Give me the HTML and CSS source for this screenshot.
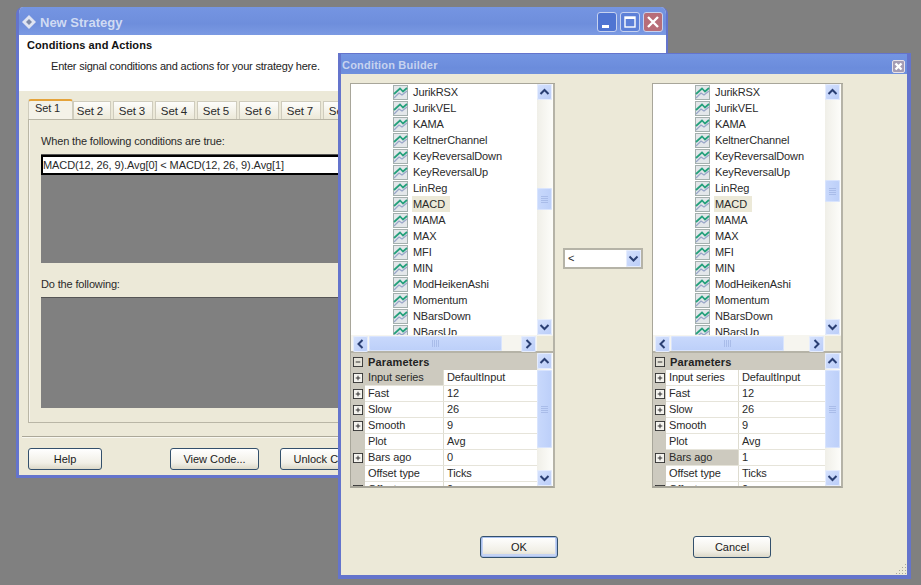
FILE: index.html
```html
<!DOCTYPE html>
<html lang="en">
<head>
<meta charset="utf-8">
<title>New Strategy</title>
<link rel="stylesheet" href="styles.css">
</head>
<body>
<svg class="defs" width="0" height="0">
  <symbol id="ind" viewBox="0 0 15 15">
    <rect x="0.5" y="0.5" width="14" height="14" fill="#e3e7ea" stroke="#a4b0ae"/>
    <path d="M1 13l5-5 3 2 5-4" fill="none" stroke="#98a6c8" stroke-width="1.3"/>
    <path d="M1 9l6-5.5 3 3L14 3" fill="none" stroke="#25a07c" stroke-width="1.7"/>
  </symbol>
  <symbol id="up" viewBox="0 0 15 15"><path d="M3.5 9.5l4-4 4 4" fill="none" stroke="#2a3f73" stroke-width="2"/></symbol>
  <symbol id="down" viewBox="0 0 15 15"><path d="M3.5 5.5l4 4 4-4" fill="none" stroke="#2a3f73" stroke-width="2"/></symbol>
  <symbol id="left" viewBox="0 0 15 15"><path d="M9.5 3.5l-4 4 4 4" fill="none" stroke="#2a3f73" stroke-width="2"/></symbol>
  <symbol id="right" viewBox="0 0 15 15"><path d="M5.5 3.5l4 4-4 4" fill="none" stroke="#2a3f73" stroke-width="2"/></symbol>
  <symbol id="plus" viewBox="0 0 11 11"><rect x="0.5" y="0.5" width="10" height="10" fill="#f4f3ee" stroke="#333"/><path d="M3 5.5h5M5.5 3v5" stroke="#222"/></symbol>
  <symbol id="minus" viewBox="0 0 11 11"><rect x="0.5" y="0.5" width="10" height="10" fill="#e4e2d8" stroke="#333"/><path d="M3 5.5h5" stroke="#222"/></symbol>
</svg>

<section class="window main-window">
  <header class="titlebar main-title">
    <svg class="app-icon" width="18" height="18" viewBox="0 0 18 18"><path d="M9 2l7 7-7 7-7-7z" fill="#dfe4f2"/><path d="M9 6l3 3-3 3-3-3z" fill="#7d8aa8"/></svg>
    <span class="title-text title-large">New Strategy</span>
    <span class="caption-btn btn-min"><svg width="20" height="20" viewBox="0 0 20 20"><rect x="5" y="13" width="7" height="3" fill="#fff"/></svg></span>
    <span class="caption-btn btn-max"><svg width="20" height="20" viewBox="0 0 20 20"><rect x="5" y="5" width="10" height="10" fill="none" stroke="#fff" stroke-width="1.4"/><path d="M5 6h10" stroke="#fff" stroke-width="2"/></svg></span>
    <span class="caption-btn btn-close"><svg width="20" height="20" viewBox="0 0 20 20"><path d="M5 5l10 10M15 5L5 15" stroke="#fff" stroke-width="2.4"/></svg></span>
  </header>
  <div class="wizard-head">
    <h1>Conditions and Actions</h1>
    <p>Enter signal conditions and actions for your strategy here.</p>
  </div>
  <div class="wizard-body">
    <div class="tabs">
      <span class="tab tab-active">Set 1</span>
      <span class="tab tab-n2">Set 2</span>
      <span class="tab">Set 3</span>
      <span class="tab">Set 4</span>
      <span class="tab">Set 5</span>
      <span class="tab">Set 6</span>
      <span class="tab">Set 7</span>
      <span class="tab">Set 8</span>
    </div>
    <div class="tab-panel">
      <div class="label">When the following conditions are true:</div>
      <div class="gray-box box-conditions"><div class="cond-row">MACD(12, 26, 9).Avg[0] &lt; MACD(12, 26, 9).Avg[1]</div></div>
      <div class="label label-do">Do the following:</div>
      <div class="gray-box box-actions"></div>
    </div>
    <div class="groove"></div>
    <div class="main-buttons">
      <button class="btn btn-help">Help</button>
      <button class="btn btn-view">View Code...</button>
      <button class="btn btn-unlock">Unlock Code</button>
    </div>
  </div>
</section>

<section class="window builder">
  <header class="titlebar builder-title">
    <span class="title-text title-small">Condition Builder</span>
    <span class="small-close"><svg width="13" height="13" viewBox="0 0 13 13"><path d="M3.5 3.5l6 6M9.5 3.5l-6 6" stroke="#fff" stroke-width="2.4"/></svg></span>
  </header>
  <div class="builder-body">
    <div class="columns">
      <div class="panel panel-left">
        <div class="list">
          <div class="list-main">
            <ul class="rows">
              <li><svg class="ic"><use href="#ind"/></svg><span>JurikRSX</span></li>
              <li><svg class="ic"><use href="#ind"/></svg><span>JurikVEL</span></li>
              <li><svg class="ic"><use href="#ind"/></svg><span>KAMA</span></li>
              <li><svg class="ic"><use href="#ind"/></svg><span>KeltnerChannel</span></li>
              <li><svg class="ic"><use href="#ind"/></svg><span>KeyReversalDown</span></li>
              <li><svg class="ic"><use href="#ind"/></svg><span>KeyReversalUp</span></li>
              <li><svg class="ic"><use href="#ind"/></svg><span>LinReg</span></li>
              <li><svg class="ic"><use href="#ind"/></svg><span class="sel">MACD</span></li>
              <li><svg class="ic"><use href="#ind"/></svg><span>MAMA</span></li>
              <li><svg class="ic"><use href="#ind"/></svg><span>MAX</span></li>
              <li><svg class="ic"><use href="#ind"/></svg><span>MFI</span></li>
              <li><svg class="ic"><use href="#ind"/></svg><span>MIN</span></li>
              <li><svg class="ic"><use href="#ind"/></svg><span>ModHeikenAshi</span></li>
              <li><svg class="ic"><use href="#ind"/></svg><span>Momentum</span></li>
              <li><svg class="ic"><use href="#ind"/></svg><span>NBarsDown</span></li>
              <li><svg class="ic"><use href="#ind"/></svg><span>NBarsUp</span></li>
            </ul>
            <div class="vscroll">
              <span class="sb-btn"><svg><use href="#up"/></svg></span>
              <span class="track"><span class="thumb thumb-left"><i></i></span></span>
              <span class="sb-btn"><svg><use href="#down"/></svg></span>
            </div>
          </div>
          <div class="hscroll">
            <span class="sb-btn"><svg><use href="#left"/></svg></span>
            <span class="h-track"><span class="h-thumb h-thumb-left"><i></i></span></span>
            <span class="sb-btn"><svg><use href="#right"/></svg></span>
            <span class="corner"></span>
          </div>
        </div>
        <div class="params">
          <div class="params-main">
            <div class="grid grid-left">
              <div class="cat"><svg class="box"><use href="#minus"/></svg><b>Parameters</b></div>
              <div class="row"><span class="gut"><svg class="box"><use href="#plus"/></svg></span><span class="name name-sel">Input series</span><span class="val">DefaultInput</span></div>
              <div class="row"><span class="gut"><svg class="box"><use href="#plus"/></svg></span><span class="name">Fast</span><span class="val">12</span></div>
              <div class="row"><span class="gut"><svg class="box"><use href="#plus"/></svg></span><span class="name">Slow</span><span class="val">26</span></div>
              <div class="row"><span class="gut"><svg class="box"><use href="#plus"/></svg></span><span class="name">Smooth</span><span class="val">9</span></div>
              <div class="row"><span class="gut"></span><span class="name">Plot</span><span class="val">Avg</span></div>
              <div class="row"><span class="gut"><svg class="box"><use href="#plus"/></svg></span><span class="name">Bars ago</span><span class="val">0</span></div>
              <div class="row"><span class="gut"></span><span class="name">Offset type</span><span class="val">Ticks</span></div>
              <div class="row"><span class="gut"><svg class="box"><use href="#plus"/></svg></span><span class="name">Offset</span><span class="val">0</span></div>
            </div>
            <div class="vscroll">
              <span class="sb-btn"><svg><use href="#up"/></svg></span>
              <span class="track"><span class="thumb thumb-param"><i></i></span></span>
              <span class="sb-btn"><svg><use href="#down"/></svg></span>
            </div>
          </div>
        </div>
      </div>

      <div class="combo"><span class="combo-text">&lt;</span><span class="sb-btn combo-btn"><svg><use href="#down"/></svg></span></div>

      <div class="panel panel-right">
        <div class="list">
          <div class="list-main">
            <ul class="rows">
              <li><svg class="ic"><use href="#ind"/></svg><span>JurikRSX</span></li>
              <li><svg class="ic"><use href="#ind"/></svg><span>JurikVEL</span></li>
              <li><svg class="ic"><use href="#ind"/></svg><span>KAMA</span></li>
              <li><svg class="ic"><use href="#ind"/></svg><span>KeltnerChannel</span></li>
              <li><svg class="ic"><use href="#ind"/></svg><span>KeyReversalDown</span></li>
              <li><svg class="ic"><use href="#ind"/></svg><span>KeyReversalUp</span></li>
              <li><svg class="ic"><use href="#ind"/></svg><span>LinReg</span></li>
              <li><svg class="ic"><use href="#ind"/></svg><span class="sel">MACD</span></li>
              <li><svg class="ic"><use href="#ind"/></svg><span>MAMA</span></li>
              <li><svg class="ic"><use href="#ind"/></svg><span>MAX</span></li>
              <li><svg class="ic"><use href="#ind"/></svg><span>MFI</span></li>
              <li><svg class="ic"><use href="#ind"/></svg><span>MIN</span></li>
              <li><svg class="ic"><use href="#ind"/></svg><span>ModHeikenAshi</span></li>
              <li><svg class="ic"><use href="#ind"/></svg><span>Momentum</span></li>
              <li><svg class="ic"><use href="#ind"/></svg><span>NBarsDown</span></li>
              <li><svg class="ic"><use href="#ind"/></svg><span>NBarsUp</span></li>
            </ul>
            <div class="vscroll">
              <span class="sb-btn"><svg><use href="#up"/></svg></span>
              <span class="track"><span class="thumb thumb-right"><i></i></span></span>
              <span class="sb-btn"><svg><use href="#down"/></svg></span>
            </div>
          </div>
          <div class="hscroll">
            <span class="sb-btn"><svg><use href="#left"/></svg></span>
            <span class="h-track"><span class="h-thumb h-thumb-right"><i></i></span></span>
            <span class="sb-btn"><svg><use href="#right"/></svg></span>
            <span class="corner"></span>
          </div>
        </div>
        <div class="params">
          <div class="params-main">
            <div class="grid grid-right">
              <div class="cat"><svg class="box"><use href="#minus"/></svg><b>Parameters</b></div>
              <div class="row"><span class="gut"><svg class="box"><use href="#plus"/></svg></span><span class="name">Input series</span><span class="val">DefaultInput</span></div>
              <div class="row"><span class="gut"><svg class="box"><use href="#plus"/></svg></span><span class="name">Fast</span><span class="val">12</span></div>
              <div class="row"><span class="gut"><svg class="box"><use href="#plus"/></svg></span><span class="name">Slow</span><span class="val">26</span></div>
              <div class="row"><span class="gut"><svg class="box"><use href="#plus"/></svg></span><span class="name">Smooth</span><span class="val">9</span></div>
              <div class="row"><span class="gut"></span><span class="name">Plot</span><span class="val">Avg</span></div>
              <div class="row"><span class="gut"><svg class="box"><use href="#plus"/></svg></span><span class="name name-sel">Bars ago</span><span class="val">1</span></div>
              <div class="row"><span class="gut"></span><span class="name">Offset type</span><span class="val">Ticks</span></div>
              <div class="row"><span class="gut"><svg class="box"><use href="#plus"/></svg></span><span class="name">Offset</span><span class="val">0</span></div>
            </div>
            <div class="vscroll">
              <span class="sb-btn"><svg><use href="#up"/></svg></span>
              <span class="track"><span class="thumb thumb-param"><i></i></span></span>
              <span class="sb-btn"><svg><use href="#down"/></svg></span>
            </div>
          </div>
        </div>
      </div>
    </div>
    <div class="builder-buttons">
      <button class="btn btn-ok">OK</button>
      <button class="btn btn-cancel">Cancel</button>
    </div>
    <svg class="grip" width="12" height="12" viewBox="0 0 12 12"><path d="M10 1h1v1h-1zM7 4h1v1H7zM10 4h1v1h-1zM4 7h1v1H4zM7 7h1v1H7zM10 7h1v1h-1zM1 10h1v1H1zM4 10h1v1H4zM7 10h1v1H7zM10 10h1v1h-1z" fill="#a8a69a"/></svg>
  </div>
</section>
</body>
</html>
```
FILE: styles.css
```css
* { box-sizing: border-box; }
html, body { margin: 0; height: 100%; }
body {
  position: relative;
  width: 921px;
  height: 585px;
  overflow: hidden;
  background: #808080;
  font: 11px/16px "Liberation Sans", Arial, sans-serif;
  letter-spacing: -0.1px;
  color: #2a2a2a;
}
.defs { position: absolute; }
.window {
  position: absolute;
  display: flex;
  flex-direction: column;
  overflow: hidden;
}
.main-window {
  left: 16px; top: 7px;
  width: 652px; height: 471px;
  background: #ece9d8;
  border-radius: 7px 7px 0 0;
  border: solid #6474cc;
  border-width: 0 2px 3px 3px;
}
.builder {
  left: 338px; top: 53px;
  width: 573px; height: 526px;
  background: #ece9d8;
  border: solid #6474cc;
  border-width: 1px 4px 4px 3px;
}
.titlebar { display: flex; align-items: center; flex: none; }
.main-title {
  height: 28px;
  margin-left: -3px;
  margin-right: -2px;
  padding: 2px 5px 0 4px;
  background: linear-gradient(#7595e2, #6e8edc 60%, #7b9ae3);
}
.builder-title {
  height: 20px;
  padding: 2px 2px 0 1px;
  background: linear-gradient(#7495e2, #6b8cdc 70%, #6f90dd);
}
.app-icon { margin-right: 2px; }
.title-text {
  flex: 1;
  font: bold 13px/18px "Liberation Sans", Arial, sans-serif;
  color: #d0dbf3;
  letter-spacing: 0;
}
.title-large { padding-top: 1px; }
.title-small { font-size: 11px; color: #c7d3ef; letter-spacing: 0.2px; }
.caption-btn {
  width: 20px; height: 20px;
  margin-left: 3px;
  border-radius: 3px;
  border: 1px solid #c7d2ef;
  display: flex;
  background: #4f74d2;
}
.caption-btn svg { margin: -1px; }
.btn-max { background: #5d80d8; }
.btn-close { background: #b86d78; }
.small-close {
  width: 13px; height: 13px;
  margin-top: 2px;
  background: #a59db4;
  border: 1px solid #e8e3ea;
  border-radius: 2px;
}
.small-close svg { display: block; margin: -1px; }

.wizard-head {
  height: 56px;
  flex: none;
  background: #fff;
  padding: 2px 0 0 8px;
}
.wizard-head h1 { margin: 0; font: bold 11px/16px "Liberation Sans", Arial, sans-serif; letter-spacing: 0.1px; color: #111; }
.wizard-head p { margin: 5px 0 0 24px; color: #222; letter-spacing: -0.2px; }
.wizard-body {
  flex: 1;
  display: flex;
  flex-direction: column;
  padding: 8px 0 0 9px;
}
.tabs { display: flex; height: 20px; flex: none; align-items: flex-end; }
.tab {
  width: 40px;
  height: 18px;
  margin-right: 2px;
  padding-right: 2px;
  background: linear-gradient(#fdfdfb, #ece9d8);
  border: 1px solid #cfccbd;
  border-bottom: 0;
  text-align: center;
  font-size: 11.5px;
  line-height: 18px;
  flex: none;
}
.tab-active {
  width: 45px;
  height: 20px;
  margin-right: 0;
  padding-right: 6px;
  font-size: 11px;
  background: #f4f2e8;
  border-top: 2px solid #e5a33a;
  border-radius: 3px 3px 0 0;
  line-height: 15px;
}
.tab-n2 { width: 38px; padding-right: 4px; }
.tab-panel {
  flex: none;
  width: 622px;
  height: 304px;
  border: 1px solid #b9b6a6;
  background: #ece9d8;
  box-shadow: inset 1px 0 0 #f6f4ec, inset -1px 0 0 #d6d3c4;
  padding: 13px 0 0 12px;
}
.label { height: 16px; line-height: 16px; letter-spacing: -0.15px; }
.gray-box { background: #808080; width: 580px; border-top: 1px solid #555; }
.box-conditions { height: 109px; margin-top: 5px; }
.cond-row {
  height: 20px;
  background: #fff;
  border: 2px solid #000;
  padding-left: 0;
  line-height: 16px;
  white-space: nowrap;
}
.label-do { margin-top: 13px; }
.box-actions { height: 111px; margin-top: 5px; }
.groove { flex: none; height: 2px; margin: 13px 0 0 -6px; background: #aba899; border-bottom: 1px solid #f8f7f0; }
.main-buttons { display: flex; margin-top: 10px; }
.btn {
  font: 11px/16px "Liberation Sans", Arial, sans-serif;
  color: #1a1a1a;
  height: 22px;
  padding: 0;
  background: linear-gradient(#ffffff, #f1efe6 70%, #dcd8c8);
  border: 1px solid #33506c;
  border-radius: 3px;
}
.btn-help { width: 74px; }
.btn-view { width: 89px; margin-left: 68px; }
.btn-unlock { width: 90px; margin-left: 21px; }

.builder-body {
  position: relative;
  flex: 1;
  display: flex;
  flex-direction: column;
  padding: 9px 0 0 9px;
}
.columns { display: flex; flex: none; }
.panel { flex: none; display: flex; flex-direction: column; border: solid #a8a69a; border-width: 1px 0 0 1px; }
.panel-left { width: 205px; }
.panel-right { width: 191px; }
.list {
  height: 269px;
  flex: none;
  display: flex;
  flex-direction: column;
  background: #fff;
  border-right: 2px solid #b5b3a7;
}
.list-main { flex: none; height: 251px; display: flex; }
.rows {
  flex: 1;
  margin: 0;
  padding: 0 0 0 42px;
  list-style: none;
  overflow: hidden;
  background: #fff;
}
.rows li { height: 16px; display: flex; align-items: center; }
.ic { width: 15px; height: 15px; flex: none; margin-right: 4px; }
.rows span { padding: 0 1px; height: 16px; line-height: 16px; white-space: nowrap; }
.rows .sel { background: #ece9d8; padding-right: 5px; }
.vscroll {
  width: 16px;
  flex: none;
  display: flex;
  flex-direction: column;
  background: linear-gradient(90deg, #f0efe8, #fdfdfa);
}
.sb-btn {
  width: 15px; height: 16px;
  flex: none;
  display: block;
  background: linear-gradient(135deg, #d6e2fd, #b9ccf8);
  border-radius: 2px;
  box-shadow: inset 0 0 0 1px #e6edfd;
}
.sb-btn svg { width: 15px; height: 16px; display: block; }
.track { flex: 1; display: block; padding-top: 1px; min-height: 0; }
.thumb {
  display: flex;
  align-items: center;
  justify-content: center;
  width: 15px;
  background: linear-gradient(90deg, #c9d9fc, #bccff9);
  border-radius: 2px;
  box-shadow: inset 0 0 0 1px #d9e4fd;
}
.thumb i, .h-thumb i { display: block; width: 7px; height: 7px; background: repeating-linear-gradient(#a9bce9 0 1px, transparent 1px 2px); }
.thumb-left { height: 22px; margin-top: 87px; }
.thumb-right { height: 22px; margin-top: 79px; }
.thumb-param { height: 78px; }
.hscroll { flex: none; display: flex; padding: 1px 0 0 2px; background: #f6f5ef; border-bottom: 2px solid #b5b3a7; height: 18px; }
.h-track { flex: 1; display: block; padding-left: 1px; }
.h-thumb {
  display: flex;
  align-items: center;
  justify-content: center;
  height: 15px;
  background: linear-gradient(#c9d9fc, #bccff9);
  border-radius: 2px;
  box-shadow: inset 0 0 0 1px #d9e4fd;
}
.h-thumb i { background: repeating-linear-gradient(90deg, #a9bce9 0 1px, transparent 1px 2px); }
.h-thumb-left { width: 133px; }
.h-thumb-right { width: 113px; }
.corner { width: 16px; flex: none; background: #ece9d8; margin-left: 1px; }

.params {
  height: 135px;
  flex: none;
  overflow: hidden;
  background: #fff;
  border-right: 2px solid #b5b3a7;
  border-bottom: 2px solid #a8a69a;
}
.params-main { display: flex; height: 133px; }
.grid { flex: 1; min-width: 0; overflow: hidden; }
.cat {
  height: 17px;
  background: #cdcabf;
  display: flex;
  align-items: center;
  padding-left: 2px;
}
.cat b { margin-left: 5px; letter-spacing: 0.15px; color: #222; }
.box { width: 10px; height: 10px; display: block; }
.row { height: 16px; display: flex; border-bottom: 1px solid #e6e4da; }
.gut { width: 14px; flex: none; background: #cdcabf; padding: 3px 0 0 2px; margin-bottom: -1px; }
.name { flex: none; padding-left: 3px; white-space: nowrap; line-height: 15px; border-right: 1px solid #dedcd0; }
.name-sel { background: #cdcabf; }
.val { flex: 1; padding-left: 3px; line-height: 15px; white-space: nowrap; }
.grid-left .name { width: 79px; }
.grid-right .gut { width: 13px; }
.grid-right .name { width: 73px; }

.combo {
  flex: none;
  width: 80px;
  height: 21px;
  margin: 165px 9px 0 8px;
  display: flex;
  background: #fff;
  border: 2px solid #b5b3a7;
}
.combo-text { flex: 1; padding-left: 3px; line-height: 17px; }
.combo-btn { height: 17px; }
.combo-btn svg { height: 17px; }

.builder-buttons { display: flex; padding-left: 130px; margin-top: 48px; }
.btn-ok { width: 78px; box-shadow: inset 0 0 0 1px #a9c0ee, inset 0 -1px 0 2px #c5d3f3; }
.btn-cancel { width: 78px; margin-left: 135px; }
.grip { position: absolute; right: 0; bottom: 0; }
```
